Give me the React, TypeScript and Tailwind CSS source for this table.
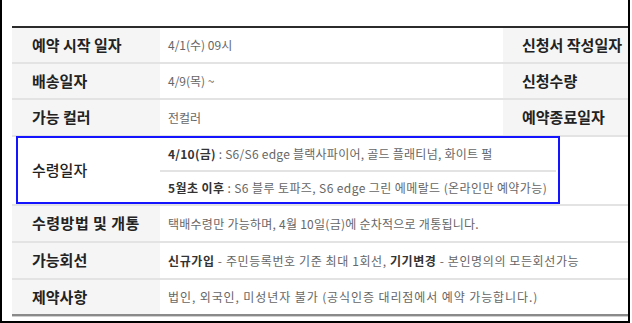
const FONT = "font-['Noto_Sans_CJK_KR','Noto_Sans',sans-serif]";

const Label = ({ children, className = "" }: { children: React.ReactNode; className?: string }) => (
  <div
    className={`w-[148px] shrink-0 flex items-center pl-[20px] bg-[#f5f5f5] text-[15px] font-bold text-[#222] ${className}`}
  >
    {children}
  </div>
);

const Value = ({ children, className = "" }: { children?: React.ReactNode; className?: string }) => (
  <div className={`flex items-center pl-[8px] text-[12px] text-[#666] whitespace-nowrap ${className}`}>
    {children}
  </div>
);

export default function App() {
  const rowBase = "flex h-[36px] border-b-2 border-[#e3e3e3]";

  return (
    <div className={`w-[632px] h-[323px] bg-white ${FONT}`}>
      <div className="relative w-[630px] h-[323px] border-l-2 border-r-2 border-b-2 border-black overflow-hidden pl-[10px] pt-[26px]">
        <div className="w-[700px] border-t-2 border-[#2b2b2b]">
          {/* row 1 */}
          <div className={rowBase}>
            <Label>예약 시작 일자</Label>
            <Value className="w-[343px]">4/1(수) 09시</Value>
            <div className="w-[130px] flex items-center pl-[19px] bg-[#f5f5f5] text-[15px] font-bold text-[#222]">
              신청서 작성일자
            </div>
            <Value className="flex-1" />
          </div>

          {/* row 2 */}
          <div className={rowBase}>
            <Label>배송일자</Label>
            <Value className="w-[343px]">4/9(목) ~</Value>
            <div className="w-[130px] flex items-center pl-[19px] bg-[#f5f5f5] text-[15px] font-bold text-[#222]">
              신청수량
            </div>
            <Value className="flex-1" />
          </div>

          {/* row 3 */}
          <div className={`${rowBase} h-[37px]`}>
            <Label>가능 컬러</Label>
            <Value className="w-[343px]">전컬러</Value>
            <div className="w-[130px] flex items-center pl-[19px] bg-[#f5f5f5] text-[15px] font-bold text-[#222]">
              예약종료일자
            </div>
            <Value className="flex-1" />
          </div>

          {/* row 4 */}
          <div className="flex h-[69px] border-b-2 border-[#e3e3e3]">
            <Label className="bg-white font-medium">수령일자</Label>
            <div className="w-[396px] flex flex-col text-[12px] text-[#666] whitespace-nowrap">
              <div className="h-[35px] flex items-center pl-[8px] border-b-2 border-[#e3e3e3] tracking-[0.25px]">
                <b className="text-[#333]">4/10(금)</b>
                <span>&nbsp;: S6/S6 edge 블랙사파이어, 골드 플래티넘, 화이트 펄</span>
              </div>
              <div className="flex-1 flex items-center pl-[8px] tracking-[0.4px]">
                <b className="text-[#333]">5월초 이후</b>
                <span>&nbsp;: S6 블루 토파즈, S6 edge 그린 에메랄드 (온라인만 예약가능)</span>
              </div>
            </div>
          </div>

          {/* row 5 */}
          <div className={`${rowBase} h-[37px]`}>
            <Label className="tracking-[0.5px]">수령방법 및 개통</Label>
            <Value className="tracking-[0.25px]">택배수령만 가능하며, 4월 10일(금)에 순차적으로 개통됩니다.</Value>
          </div>

          {/* row 6 */}
          <div className={`${rowBase} h-[37px]`}>
            <Label>가능회선</Label>
            <Value className="tracking-[0.6px]">
              <b className="text-[#333]">신규가입</b>
              <span>&nbsp;- 주민등록번호 기준 최대 1회선,&nbsp;</span>
              <b className="text-[#333]">기기변경</b>
              <span>&nbsp;- 본인명의의 모든회선가능</span>
            </Value>
          </div>

          {/* row 7 */}
          <div className="flex h-[34px]">
            <Label>제약사항</Label>
            <Value className="tracking-[0.9px]">법인, 외국인, 미성년자 불가 (공식인증 대리점에서 예약 가능합니다.)</Value>
          </div>
          <div className="h-[2px] bg-[#8a8a8a]" />
          <div className="h-px bg-[#cfcfcf]" />
        </div>

        {/* blue highlight box */}
        <div className="absolute left-[14px] top-[136px] w-[544px] h-[68px] border-2 border-[#1414ff]" />
      </div>
    </div>
  );
}
